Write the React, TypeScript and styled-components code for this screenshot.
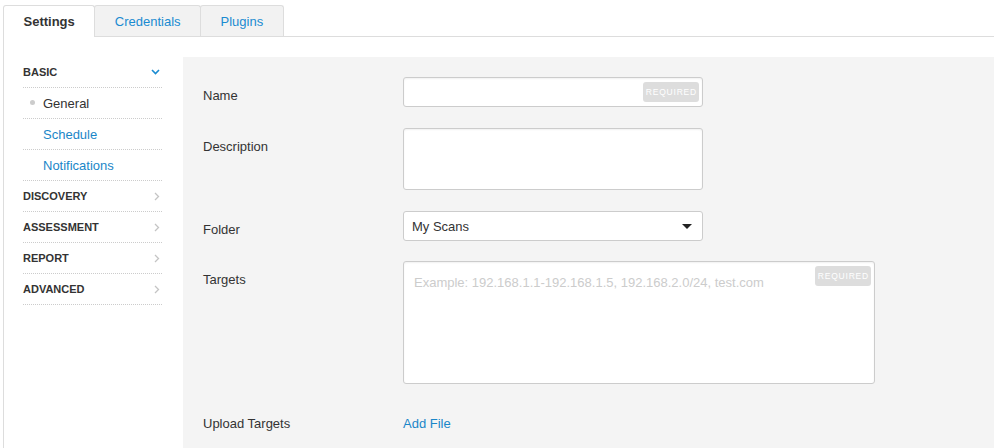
import styled, { createGlobalStyle } from "styled-components";

const GlobalStyle = createGlobalStyle`
  body {
    margin: 0;
    background: #fff;
    font-family: "Liberation Sans", Arial, sans-serif;
    font-size: 13px;
    color: #333;
  }
`;

const Page = styled.div`
  padding: 5px 1px 0 3px;
  height: 443px;
  overflow: hidden;
`;

const TabBar = styled.ul`
  display: flex;
  margin: 0;
  padding: 0;
  list-style: none;
  border-bottom: 1px solid #ddd;
  height: 31px;
`;

const Tab = styled.li<{ $active?: boolean }>`
  box-sizing: border-box;
  display: flex;
  align-items: center;
  justify-content: center;
  padding: 0 19.5px;
  margin-left: -1px;
  border: 1px solid #ddd;
  border-bottom: none;
  border-radius: 3px 3px 0 0;
  background: ${(p) => (p.$active ? "#fff" : "#f2f2f2")};
  color: ${(p) => (p.$active ? "#333" : "#1a8bd1")};
  font-weight: ${(p) => (p.$active ? "bold" : "normal")};
  height: ${(p) => (p.$active ? "32px" : "31px")};
  &:first-child {
    margin-left: 0;
  }
`;

const Panel = styled.div`
  display: flex;
  border-left: 1px solid #ddd;
  height: 420px;
`;

const Sidebar = styled.nav`
  width: 179px;
  flex-shrink: 0;
  box-sizing: border-box;
  padding: 20px 21px 0 19px;
`;

const Row = styled.div<{ $sub?: boolean }>`
  position: relative;
  height: 31px;
  box-sizing: border-box;
  display: flex;
  align-items: center;
  justify-content: space-between;
  border-bottom: 1px dotted #ccc;
  padding-left: ${(p) => (p.$sub ? "20px" : "0")};
`;

const Heading = styled.span`
  font-size: 11px;
  font-weight: bold;
  text-transform: uppercase;
  color: #333;
`;

const SubLink = styled.span<{ $current?: boolean }>`
  color: ${(p) => (p.$current ? "#333" : "#1a86c8")};
`;

const Bullet = styled.span`
  position: absolute;
  left: 7px;
  top: 12px;
  width: 5px;
  height: 5px;
  border-radius: 50%;
  background: #ccc;
`;

const Chevron = styled.svg`
  margin-right: 2px;
`;

const Content = styled.main`
  flex: 1;
  margin-top: 20px;
  background: #f4f4f4;
  padding: 20px 20px 0 20px;
`;

const FormRow = styled.div<{ $gap?: number }>`
  display: grid;
  grid-template-columns: 200px auto;
  margin-bottom: ${(p) => p.$gap ?? 21}px;
`;

const Label = styled.label`
  padding-top: 11px;
  line-height: 16px;
  color: #333;
`;

const Field = styled.div<{ $w: number; $h: number }>`
  position: relative;
  width: ${(p) => p.$w}px;
  height: ${(p) => p.$h}px;
  box-sizing: border-box;
  background: #fff;
  border: 1px solid #ccc;
  border-radius: 3px;
  box-shadow: inset 0 1px 2px rgba(0, 0, 0, 0.06);
`;

const Placeholder = styled.span`
  position: absolute;
  left: 10px;
  top: 13px;
  color: #ccc;
  font-size: 13px;
`;

const Required = styled.span`
  position: absolute;
  top: 4px;
  right: 3px;
  height: 20px;
  padding: 0 2px 0 3px;
  display: flex;
  align-items: center;
  background: #ddd;
  color: #fff;
  font-size: 8.5px;
  letter-spacing: 0.8px;
  border-radius: 3px;
`;

const Select = styled.div`
  width: 300px;
  height: 30px;
  box-sizing: border-box;
  display: flex;
  align-items: center;
  justify-content: space-between;
  padding: 0 10px 0 8px;
  background: #fff;
  border: 1px solid #ccc;
  border-radius: 3px;
  color: #333;
`;

const Caret = styled.span`
  width: 0;
  height: 0;
  border-left: 5px solid transparent;
  border-right: 5px solid transparent;
  border-top: 5px solid #222;
`;

const Link = styled.a`
  padding-top: 11px;
  line-height: 16px;
  color: #1a86c8;
  text-decoration: none;
`;

const ChevronDown = () => (
  <Chevron width="9" height="6" viewBox="0 0 9 6">
    <path d="M1 1l3.5 3.5L8 1" fill="none" stroke="#1a8bd1" strokeWidth="1.6" />
  </Chevron>
);

const ChevronRight = () => (
  <Chevron width="6" height="9" viewBox="0 0 6 9">
    <path d="M1 1l3.5 3.5L1 8" fill="none" stroke="#c4c4c4" strokeWidth="1.3" />
  </Chevron>
);

const sections = ["Discovery", "Assessment", "Report", "Advanced"];

export default function App() {
  return (
    <>
      <GlobalStyle />
      <Page>
        <TabBar>
          <Tab $active>Settings</Tab>
          <Tab>Credentials</Tab>
          <Tab>Plugins</Tab>
        </TabBar>
        <Panel>
          <Sidebar>
            <Row>
              <Heading>Basic</Heading>
              <ChevronDown />
            </Row>
            <Row $sub>
              <Bullet />
              <SubLink $current>General</SubLink>
            </Row>
            <Row $sub>
              <SubLink>Schedule</SubLink>
            </Row>
            <Row $sub>
              <SubLink>Notifications</SubLink>
            </Row>
            {sections.map((s) => (
              <Row key={s}>
                <Heading>{s}</Heading>
                <ChevronRight />
              </Row>
            ))}
          </Sidebar>
          <Content>
            <FormRow>
              <Label>Name</Label>
              <Field $w={300} $h={30}>
                <Required>REQUIRED</Required>
              </Field>
            </FormRow>
            <FormRow>
              <Label>Description</Label>
              <Field $w={300} $h={62} />
            </FormRow>
            <FormRow $gap={20}>
              <Label>Folder</Label>
              <Select>
                My Scans
                <Caret />
              </Select>
            </FormRow>
            <FormRow>
              <Label>Targets</Label>
              <Field $w={472} $h={123}>
                <Placeholder>Example: 192.168.1.1-192.168.1.5, 192.168.2.0/24, test.com</Placeholder>
                <Required>REQUIRED</Required>
              </Field>
            </FormRow>
            <FormRow>
              <Label>Upload Targets</Label>
              <Link href="#">Add File</Link>
            </FormRow>
          </Content>
        </Panel>
      </Page>
    </>
  );
}
